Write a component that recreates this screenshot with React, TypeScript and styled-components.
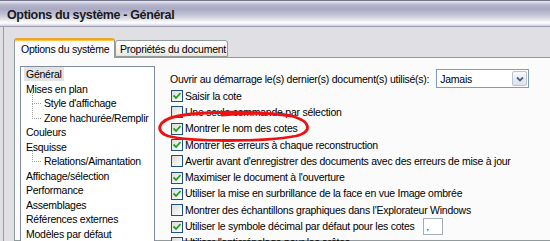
import React from "react";
import styled, { createGlobalStyle } from "styled-components";

const GlobalStyle = createGlobalStyle`
  html, body {
    margin: 0;
    padding: 0;
    background: #e0dfe3;
  }
  body {
    font-family: "Liberation Sans", Arial, sans-serif;
    font-size: 10.5px;
    letter-spacing: -0.25px;
    color: #000;
  }
`;

type TreeItem = { label: string; level: number; selected?: boolean; last?: boolean };

const treeItems: TreeItem[] = [
  { label: "Général", level: 0, selected: true },
  { label: "Mises en plan", level: 0 },
  { label: "Style d'affichage", level: 1 },
  { label: "Zone hachurée/Remplir", level: 1, last: true },
  { label: "Couleurs", level: 0 },
  { label: "Esquisse", level: 0 },
  { label: "Relations/Aimantation", level: 1, last: true },
  { label: "Affichage/sélection", level: 0 },
  { label: "Performance", level: 0 },
  { label: "Assemblages", level: 0 },
  { label: "Références externes", level: 0 },
  { label: "Modèles par défaut", level: 0 },
];

type Option = { label: string; checked: boolean; input?: string };

const options: Option[] = [
  { label: "Saisir la cote", checked: true },
  { label: "Une seule commande par sélection", checked: false },
  { label: "Montrer le nom des cotes", checked: true },
  { label: "Montrer les erreurs à chaque reconstruction", checked: true },
  { label: "Avertir avant d'enregistrer des documents avec des erreurs de mise à jour", checked: false },
  { label: "Maximiser le document à l'ouverture", checked: true },
  { label: "Utiliser la mise en surbrillance de la face en vue Image ombrée", checked: true },
  { label: "Montrer des échantillons graphiques dans l'Explorateur Windows", checked: false },
  { label: "Utiliser le symbole décimal par défaut pour les cotes", checked: true, input: "," },
  { label: "Utiliser l'anticrénelage pour les arêtes", checked: false },
];

const CheckMark = () => (
  <svg width="8" height="8" viewBox="0 0 8 8">
    <polyline points="0.5,3.5 3,6 7.5,1" fill="none" stroke="#21a121" strokeWidth="1.8" />
  </svg>
);

const ComboArrow = () => (
  <svg width="8" height="6" viewBox="0 0 8 6">
    <polyline points="1,1.5 4,4.5 7,1.5" fill="none" stroke="#4d6185" strokeWidth="1.8" />
  </svg>
);

export default function App() {
  return (
    <>
      <GlobalStyle />
      <Window>
        <TitleBar>
          <TitleText>Options du système - Général</TitleText>
        </TitleBar>

        <Body>
          <TabStrip>
            <Tab active>Options du système</Tab>
            <Tab>Propriétés du document</Tab>
          </TabStrip>

          <TabPanel>
            {/* arbre des catégories */}
            <TreeBox>
              {treeItems.map((item, i) => (
                <TreeRow key={i} level={item.level} last={item.last}>
                  <TreeLabel selected={item.selected}>{item.label}</TreeLabel>
                </TreeRow>
              ))}
            </TreeBox>

            {/* options générales */}
            <Content>
              <OpenRow>
                <span>Ouvrir au démarrage le(s) dernier(s) document(s) utilisé(s):</span>
                <Combo>
                  <ComboValue>Jamais</ComboValue>
                  <ComboButton>
                    <ComboArrow />
                  </ComboButton>
                </Combo>
              </OpenRow>

              {options.map((opt, i) => (
                <CheckRow key={i}>
                  <CheckBox>{opt.checked && <CheckMark />}</CheckBox>
                  <CheckLabel>{opt.label}</CheckLabel>
                  {opt.input && <SmallInput>{opt.input}</SmallInput>}
                </CheckRow>
              ))}
            </Content>
          </TabPanel>
        </Body>

        {/* annotation rouge */}
        <Annotation width="550" height="241" viewBox="0 0 550 241">
          <path
            d="M 292 116 C 255 111, 205 111, 178 116 C 158 120, 154 131, 168 136 C 190 142, 265 142, 296 136 C 312 132, 312 122, 292 116 C 270 112, 240 113, 222 115"
            fill="none"
            stroke="#ee1111"
            strokeWidth="2.8"
            strokeLinecap="round"
          />
        </Annotation>
      </Window>
    </>
  );
}

const Window = styled.div`
  position: relative;
  width: 550px;
  height: 241px;
  overflow: hidden;
  display: flex;
  flex-direction: column;
  background: #e0dfe3;
`;

const TitleBar = styled.div`
  height: 25px;
  flex-shrink: 0;
  display: flex;
  align-items: center;
  border-top: 1px solid #74748c;
  border-bottom: 1px solid #9d9db3;
  background: linear-gradient(
    to bottom,
    #ececf2 0px,
    #b4b4cb 4px,
    #a9a9c3 8px,
    #c4c4d6 14px,
    #e6e6ee 19px,
    #fbfbfd 21px,
    #ffffff 22px,
    #cfcfdc 25px
  );
`;

const TitleText = styled.div`
  padding-left: 7px;
  padding-top: 2px;
  font-family: "Liberation Sans", Arial, sans-serif;
  font-weight: 700;
  font-size: 12.5px;
  letter-spacing: -0.35px;
  color: #1a1a1a;
`;

const Body = styled.div`
  flex: 1;
  display: flex;
  flex-direction: column;
  margin-left: 3px;
  padding: 11px 0 0 10px;
  border-left: 1px solid #9b9bab;
  min-height: 0;
`;

const TabStrip = styled.div`
  display: flex;
  align-items: flex-end;
  height: 19px;
  position: relative;
  z-index: 1;
`;

const Tab = styled.div<{ active?: boolean }>`
  box-sizing: border-box;
  height: ${({ active }) => (active ? "20px" : "17px")};
  margin-bottom: ${({ active }) => (active ? "-1px" : "0")};
  padding: ${({ active }) => (active ? "3px 6px 0 6px" : "2px 4px 0 4px")};
  width: ${({ active }) => (active ? "101px" : "113px")};
  border: 1px solid #919b9c;
  border-bottom: ${({ active }) => (active ? "none" : "1px solid #919b9c")};
  border-top: ${({ active }) => (active ? "2px solid #f0a234" : "1px solid #919b9c")};
  border-radius: 3px 3px 0 0;
  background: ${({ active }) =>
    active ? "#fcfcfe" : "linear-gradient(to bottom, #ffffff, #f0efe9 80%, #e5e4dc)"};
  box-shadow: ${({ active }) => (active ? "inset 0 1px 0 #ffc73c" : "none")};
  white-space: nowrap;
  line-height: 13px;
  color: #000;
`;

const TabPanel = styled.div`
  flex: 1;
  display: flex;
  align-items: flex-start;
  padding: 8px 0 0 5px;
  border: 1px solid #919b9c;
  border-right: none;
  background: #fbfbfc;
  min-height: 0;
`;

const TreeBox = styled.div`
  flex-shrink: 0;
  width: 133px;
  height: 200px;
  border: 1px solid #7f8c9f;
  background: #ffffff;
`;

const TreeRow = styled.div<{ level: number; last?: boolean }>`
  position: relative;
  height: 14.5px;
  display: flex;
  align-items: center;
  padding-left: ${({ level }) => (level ? "21px" : "3px")};

  &::before {
    content: ${({ level }) => (level ? '""' : "none")};
    position: absolute;
    left: 11px;
    top: -3px;
    width: 8px;
    height: calc(50% + 3px);
    border-left: 1px dotted #a0a0a0;
    border-bottom: 1px dotted #a0a0a0;
  }

  &::after {
    content: ${({ level, last }) => (level && !last ? '""' : "none")};
    position: absolute;
    left: 11px;
    top: 50%;
    bottom: 0;
    border-left: 1px dotted #a0a0a0;
  }
`;

const TreeLabel = styled.span<{ selected?: boolean }>`
  padding: 0 2px;
  line-height: 14px;
  white-space: nowrap;
  background: ${({ selected }) => (selected ? "#e3e3e3" : "transparent")};
`;

const Content = styled.div`
  display: flex;
  flex-direction: column;
  margin-left: 15px;
  padding-top: 3px;
  white-space: nowrap;
`;

const OpenRow = styled.div`
  display: flex;
  align-items: center;
  gap: 7px;
  height: 19px;
`;

const Combo = styled.div`
  box-sizing: border-box;
  display: flex;
  align-items: center;
  width: 93px;
  height: 19px;
  border: 1px solid #7f9db9;
  background: #ffffff;
`;

const ComboValue = styled.span`
  flex: 1;
  padding-left: 3px;
`;

const ComboButton = styled.div`
  box-sizing: border-box;
  width: 15px;
  height: 15px;
  margin-right: 1px;
  display: flex;
  align-items: center;
  justify-content: center;
  border: 1px solid #b9c2d3;
  border-radius: 2px;
  background: linear-gradient(to bottom, #f8f8fb, #dfe2ea);
`;

const CheckRow = styled.div`
  display: flex;
  align-items: center;
  height: 16.3px;
  padding-left: 1px;
`;

const CheckBox = styled.div`
  box-sizing: border-box;
  width: 12px;
  height: 12px;
  margin-right: 2px;
  display: flex;
  align-items: center;
  justify-content: center;
  border: 1px solid #1c5180;
  background: linear-gradient(135deg, #dcdcd7, #ffffff);
`;

const CheckLabel = styled.span`
  line-height: 13px;
`;

const SmallInput = styled.div`
  box-sizing: border-box;
  width: 20px;
  height: 17px;
  margin-left: 8px;
  padding: 3px 0 0 3px;
  font-size: 9px;
  border: 1px solid #a5acb5;
  background: #ffffff;
`;

const Annotation = styled.svg`
  position: absolute;
  left: 0;
  top: 0;
  pointer-events: none;
`;
